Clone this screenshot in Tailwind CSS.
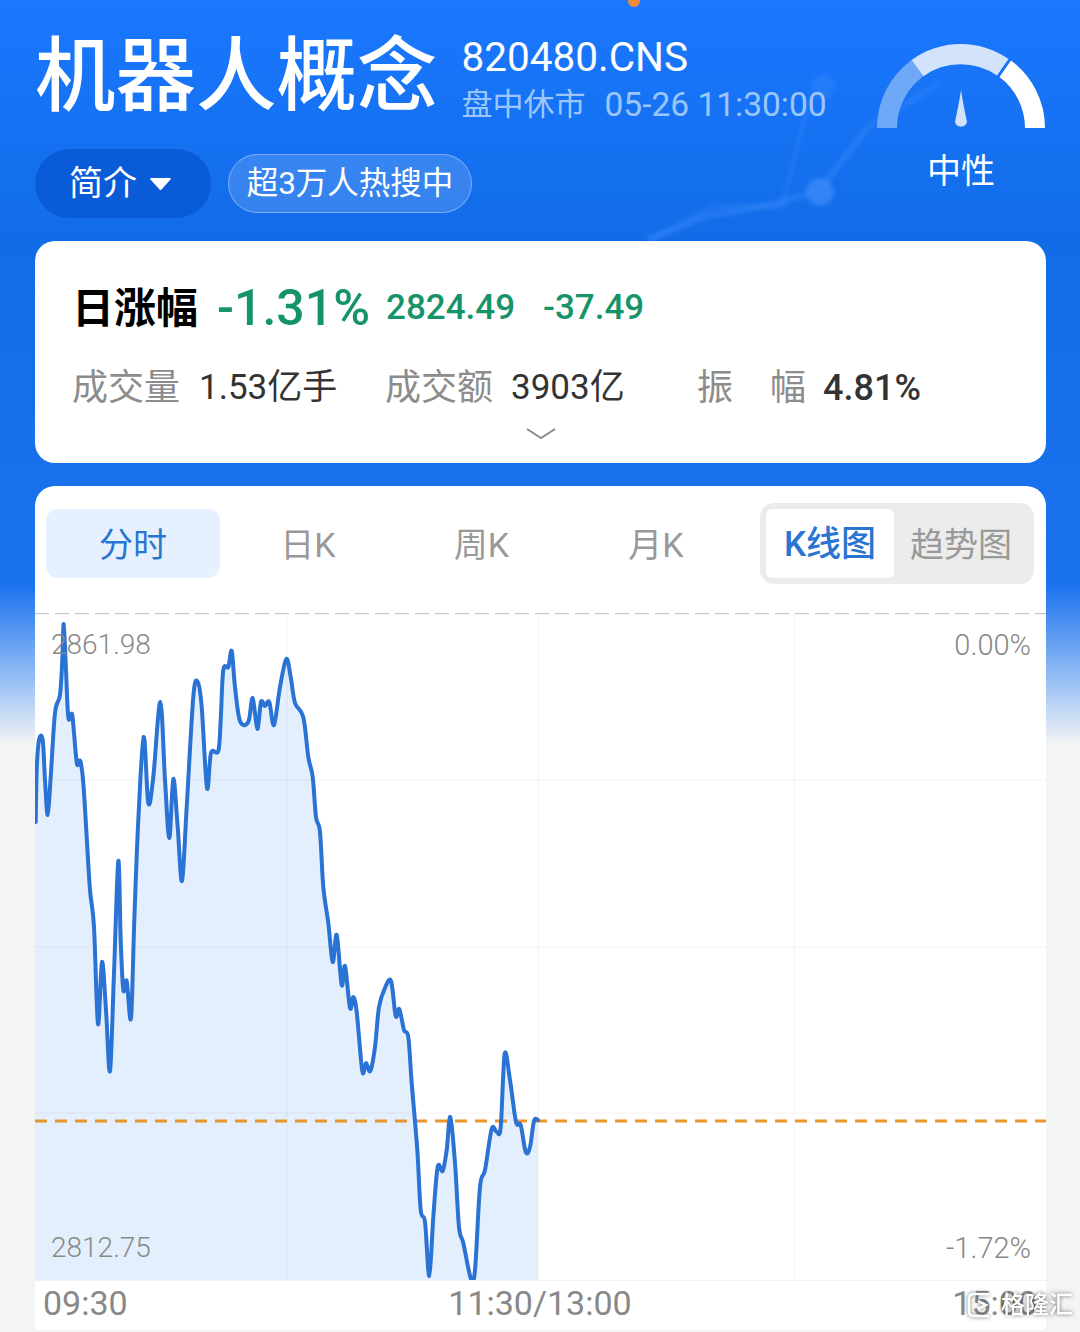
<!DOCTYPE html>
<html lang="en">
<head>
    <meta charset="UTF-8">
    <title>机器人概念</title>
    <script src="https://cdn.jsdelivr.net/npm/@tailwindcss/browser@4"></script>
</head>
<body>
<div class="relative w-[1080px] h-[1332px] overflow-hidden pl-[35px] pr-[34px] font-[Roboto,'Noto_Sans_CJK_SC',sans-serif] bg-[linear-gradient(180deg,#1a78ff_0,#126ce8_240px,#1a72ee_585px,#97bff5_680px,#f4f4f4_745px)]">

    <!-- faint chart decoration behind the header -->
    <svg class="absolute left-0 top-0 blur-[2px]" width="1080" height="241" fill="none">
        <path d="M867 128 L820 190 Q760 210 710 215 L647 240" stroke="#3f8cfb" stroke-width="6" opacity=".45"/>
        <path d="M940 83 L867 128" stroke="#3f8cfb" stroke-width="6" opacity=".35"/>
        <path d="M809 100 L782 207 L712 206 L650 240" stroke="#3f8cfb" stroke-width="4" opacity=".35"/>
        <circle cx="823" cy="87" r="12" fill="#3f8cfb" opacity=".35"/>
        <circle cx="820" cy="192" r="14" fill="#3f8cfb" opacity=".7"/>
    </svg>
    <svg class="absolute left-0 top-0" width="1080" height="10"><circle cx="634" cy="1" r="6" fill="#f08a3c"/></svg>

    <!-- Header -->
    <div class="relative flex justify-between h-[241px]">
        <div>
            <div class="flex items-start h-[90px] mt-[32px]">
                <h1 class="text-[80.500px] leading-[90px] font-medium text-white whitespace-nowrap">机器人概念</h1>
                <div class="ml-[24px] mt-[2px]">
                    <div class="text-[40.500px] leading-[46px] text-white">820480.CNS</div>
                    <div class="flex mt-[5px] text-[31px] leading-[40px] text-[#9cc6fb] whitespace-nowrap">
                        <span class="w-[143px]">盘中休市</span>
                        <span class="text-[33.500px]">05-26 11:30:00</span>
                    </div>
                </div>
            </div>
            <div class="flex items-center gap-[17px] mt-[27px]">
                <button class="flex items-center justify-center gap-[12px] w-[176px] h-[69px] pr-[5px] rounded-full bg-[#0a5bd8] text-white text-[34px]">
                    简介
                    <svg width="23" height="14" viewBox="0 0 23 14"><path d="M2 1 H21 Q22.500 1 21.500 2.500 L12.500 12.500 Q11.500 13.500 10.500 12.500 L1.500 2.500 Q.5 1 2 1Z" fill="#fff"/></svg>
                </button>
                <div class="flex items-center justify-center w-[244px] h-[59px] rounded-full bg-white/15 border border-white/35 text-white text-[31.500px]">超3万人热搜中</div>
            </div>
        </div>
        <div class="flex flex-col items-center w-[168px] mr-[1px] pt-[43px]">
            <svg width="168" height="85" viewBox="0 0 168 85">
                <path d="M0 85 A84 84 0 0 1 34.600 17 L46.400 33.200 A64 64 0 0 0 20 85Z" fill="#6fa8f6"/>
                <path d="M34.600 17 A84 84 0 0 1 131.500 16 L120 32.500 A64 64 0 0 0 46.400 33.200Z" fill="#d2e3fb"/>
                <path d="M134 17.500 A84 84 0 0 1 168 85 L148 85 A64 64 0 0 0 122.500 34Z" fill="#fff"/>
                <path d="M84 47 Q86 60 90 79 A6.200 6.200 0 0 1 78 79 Q82 60 84 47Z" fill="#cfe1fb"/>
            </svg>
            <div class="mt-[22px] text-[34px] leading-[42px] text-white">中性</div>
        </div>
    </div>

    <!-- Quote card -->
    <div class="relative h-[222px] rounded-[20px] bg-white">
        <div class="flex items-center pt-[39px] pl-[37px] h-[95px] whitespace-nowrap">
            <span class="w-[145px] text-[42px] font-bold text-black">日涨幅</span>
            <span class="w-[169px] text-[50px] font-medium text-[#169469]">-1.31%</span>
            <span class="w-[157px] text-[35px] font-medium text-[#169469]">2824.49</span>
            <span class="text-[35px] font-medium text-[#169469]">-37.49</span>
        </div>
        <div class="flex items-center pl-[37px] mt-[25px] whitespace-nowrap">
            <span class="w-[127px] text-[36px] text-[#8c8c8c]">成交量</span>
            <span class="w-[186px] text-[35px] text-[#333]">1.53亿手</span>
            <span class="w-[126px] text-[36px] text-[#8c8c8c]">成交额</span>
            <span class="w-[186px] text-[35px] text-[#333]">3903亿</span>
            <span class="flex justify-between w-[109px] mr-[17px] text-[36px] text-[#8c8c8c]"><span>振</span><span>幅</span></span>
            <span class="text-[36px] font-medium text-[#333]">4.81%</span>
        </div>
        <svg class="mx-auto mt-[12px]" width="32" height="14" viewBox="0 0 32 14" fill="none"><path d="M2 2 L16 11 L30 2" stroke="#8c8c8c" stroke-width="2"/></svg>
    </div>

    <!-- Chart card -->
    <div class="mt-[23px] h-[844px] rounded-t-[20px] rounded-b-[4px] bg-white">
        <div class="flex items-start h-[127px] pl-[11px] pr-[12px] text-[34px]">
            <div class="flex items-center justify-center mt-[23px] w-[174px] h-[69px] pt-[3px] rounded-[12px] bg-[#e5f1fe] text-[#2a75d0]">分时</div>
            <div class="flex items-center justify-center mt-[23px] w-[176px] h-[69px] pt-[3px] text-[#999]">日K</div>
            <div class="flex items-center justify-center mt-[23px] w-[171px] h-[69px] pt-[3px] text-[#999]">周K</div>
            <div class="flex items-center justify-center mt-[23px] w-[178px] h-[69px] pt-[3px] text-[#999]">月K</div>
            <div class="flex items-center ml-auto mt-[17px] w-[274px] h-[81px] p-[6px] rounded-[14px] bg-[#ececec]">
                <div class="flex items-center justify-center w-[128px] h-[69px] pt-[3px] rounded-[6px] bg-white text-[35px] font-medium text-[#2a75d0]">K线图</div>
                <div class="flex-1 pt-[3px] text-center text-[#999]">趋势图</div>
            </div>
        </div>

        <div class="relative h-[667px]">
            <svg class="absolute inset-0" width="1011" height="667" viewBox="35 613 1011 667" fill="none">
                <path id="area" fill="#e3effc"/>
                <g stroke="#000" stroke-opacity=".03" stroke-width="1.500">
                    <path d="M287 613 V1280 M538 613 V1280 M794 613 V1280"/>
                    <path d="M35 780 H1046 M35 947 H1046 M35 1113 H1046"/>
                </g>
                <path d="M35 613.500 H1046" stroke="#c9c9c9" stroke-width="1.500" stroke-dasharray="14 6"/>
                <path d="M35 1121 H1046" stroke="#e8962e" stroke-width="3" stroke-dasharray="12 8"/>
                <path id="line" stroke="#2a72d4" stroke-width="4" stroke-linejoin="round" stroke-linecap="round"/>
            </svg>
            <span class="absolute left-[16px] top-[14px] text-[28px] leading-[36px] font-light text-[#888]">2861.98</span>
            <span class="absolute right-[15px] top-[14px] text-[29px] leading-[36px] font-light text-[#888]">0.00%</span>
            <span class="absolute left-[16px] bottom-[14px] text-[28px] leading-[36px] font-light text-[#888]">2812.75</span>
            <span class="absolute right-[15px] bottom-[14px] text-[29px] leading-[36px] font-light text-[#888]">-1.72%</span>
        </div>

        <div class="flex justify-between border-t border-[#f0f0f0] pl-[8px] pr-[9px] text-[34px] leading-[44px] text-[#888]">
            <span>09:30</span>
            <span>11:30/13:00</span>
            <span>15:00</span>
        </div>
    </div>

    <!-- Watermark -->
    <div class="absolute left-[965px] top-[1290px] flex items-center gap-[6px] text-white drop-shadow-[0_0_2px_rgba(0,0,0,0.6)]">
        <svg width="30" height="30" viewBox="0 0 30 30" fill="none"><path d="M24 4 H9 Q4 4 4 9 V21 Q4 26 9 26 H24 M13 11 L21 15 L13 19" stroke="#fff" stroke-width="2.500"/></svg>
        <span class="text-[24px] leading-[30px] font-medium whitespace-nowrap">格隆汇</span>
    </div>
</div>

<script>
    // intraday points in page coordinates
    var pts = [[35.7,822],[36.7,770],[39,740],[42.7,740],[45,780],[47.7,815],[50.7,777],[55,713],[60,695],[62.3,660],[63.7,624],[65.7,663],[68.3,717],[72,714],[74,733],[77,764],[80.3,761],[83.3,783],[86.7,837],[90,890],[94,927],[98,1024],[102,962],[106,1010],[110,1071],[114,973],[118.3,861],[120.7,940],[123.3,990],[126.7,981],[131,1018],[134.3,920],[138.3,820],[143.7,737],[148.3,803],[153.3,777],[160.3,702],[165,780],[169.3,838],[173.3,779],[177.7,827],[182,881],[186.7,807],[193.3,697],[197.7,682],[201.7,707],[207,788],[211,753],[218.3,751],[220.7,720],[223.3,670],[228.3,667],[231.7,651],[235,687],[240,721],[248.3,722],[252.7,698],[257.3,729],[261,702],[265,706],[269.3,702],[274,725],[280,687],[286.3,659],[290.7,677],[295,703],[303.3,717],[308.3,757],[312.7,777],[316,817],[320,832],[323.3,887],[328.3,923],[332.7,962],[336.7,935],[341.7,985],[345,966],[350,1008],[353.3,997],[356.7,1012],[362.3,1071],[366,1063],[370.3,1071],[375,1047],[379,1007],[385,988],[391,981],[395.7,1016],[399.3,1009],[404,1030],[408.3,1037],[411.7,1083],[417.3,1150],[420.7,1210],[425,1222],[429.3,1276],[433.3,1217],[437.7,1167],[442.7,1171],[446.7,1150],[450.3,1117],[455,1163],[459,1227],[463.3,1243],[471,1279],[475,1270],[480,1187],[485,1170],[491.7,1129],[496.7,1132],[500.7,1127],[504.7,1054],[510,1080],[516,1122],[520.7,1125],[525.7,1152],[530,1147],[534,1121],[538,1120]];
    var d = 'M' + pts[0][0] + ' ' + pts[0][1];
    for (var i = 0; i < pts.length - 1; i++) {
        var p0 = pts[Math.max(i - 1, 0)], p1 = pts[i], p2 = pts[i + 1], p3 = pts[Math.min(i + 2, pts.length - 1)];
        d += ' C' + (p1[0] + (p2[0] - p0[0]) / 6) + ' ' + (p1[1] + (p2[1] - p0[1]) / 6) + ' ' + (p2[0] - (p3[0] - p1[0]) / 6) + ' ' + (p2[1] - (p3[1] - p1[1]) / 6) + ' ' + p2[0] + ' ' + p2[1];
    }
    document.getElementById('line').setAttribute('d', d);
    document.getElementById('area').setAttribute('d', d + ' L538 1280 L35 1280 L35 822Z');
</script>
</body>
</html>
